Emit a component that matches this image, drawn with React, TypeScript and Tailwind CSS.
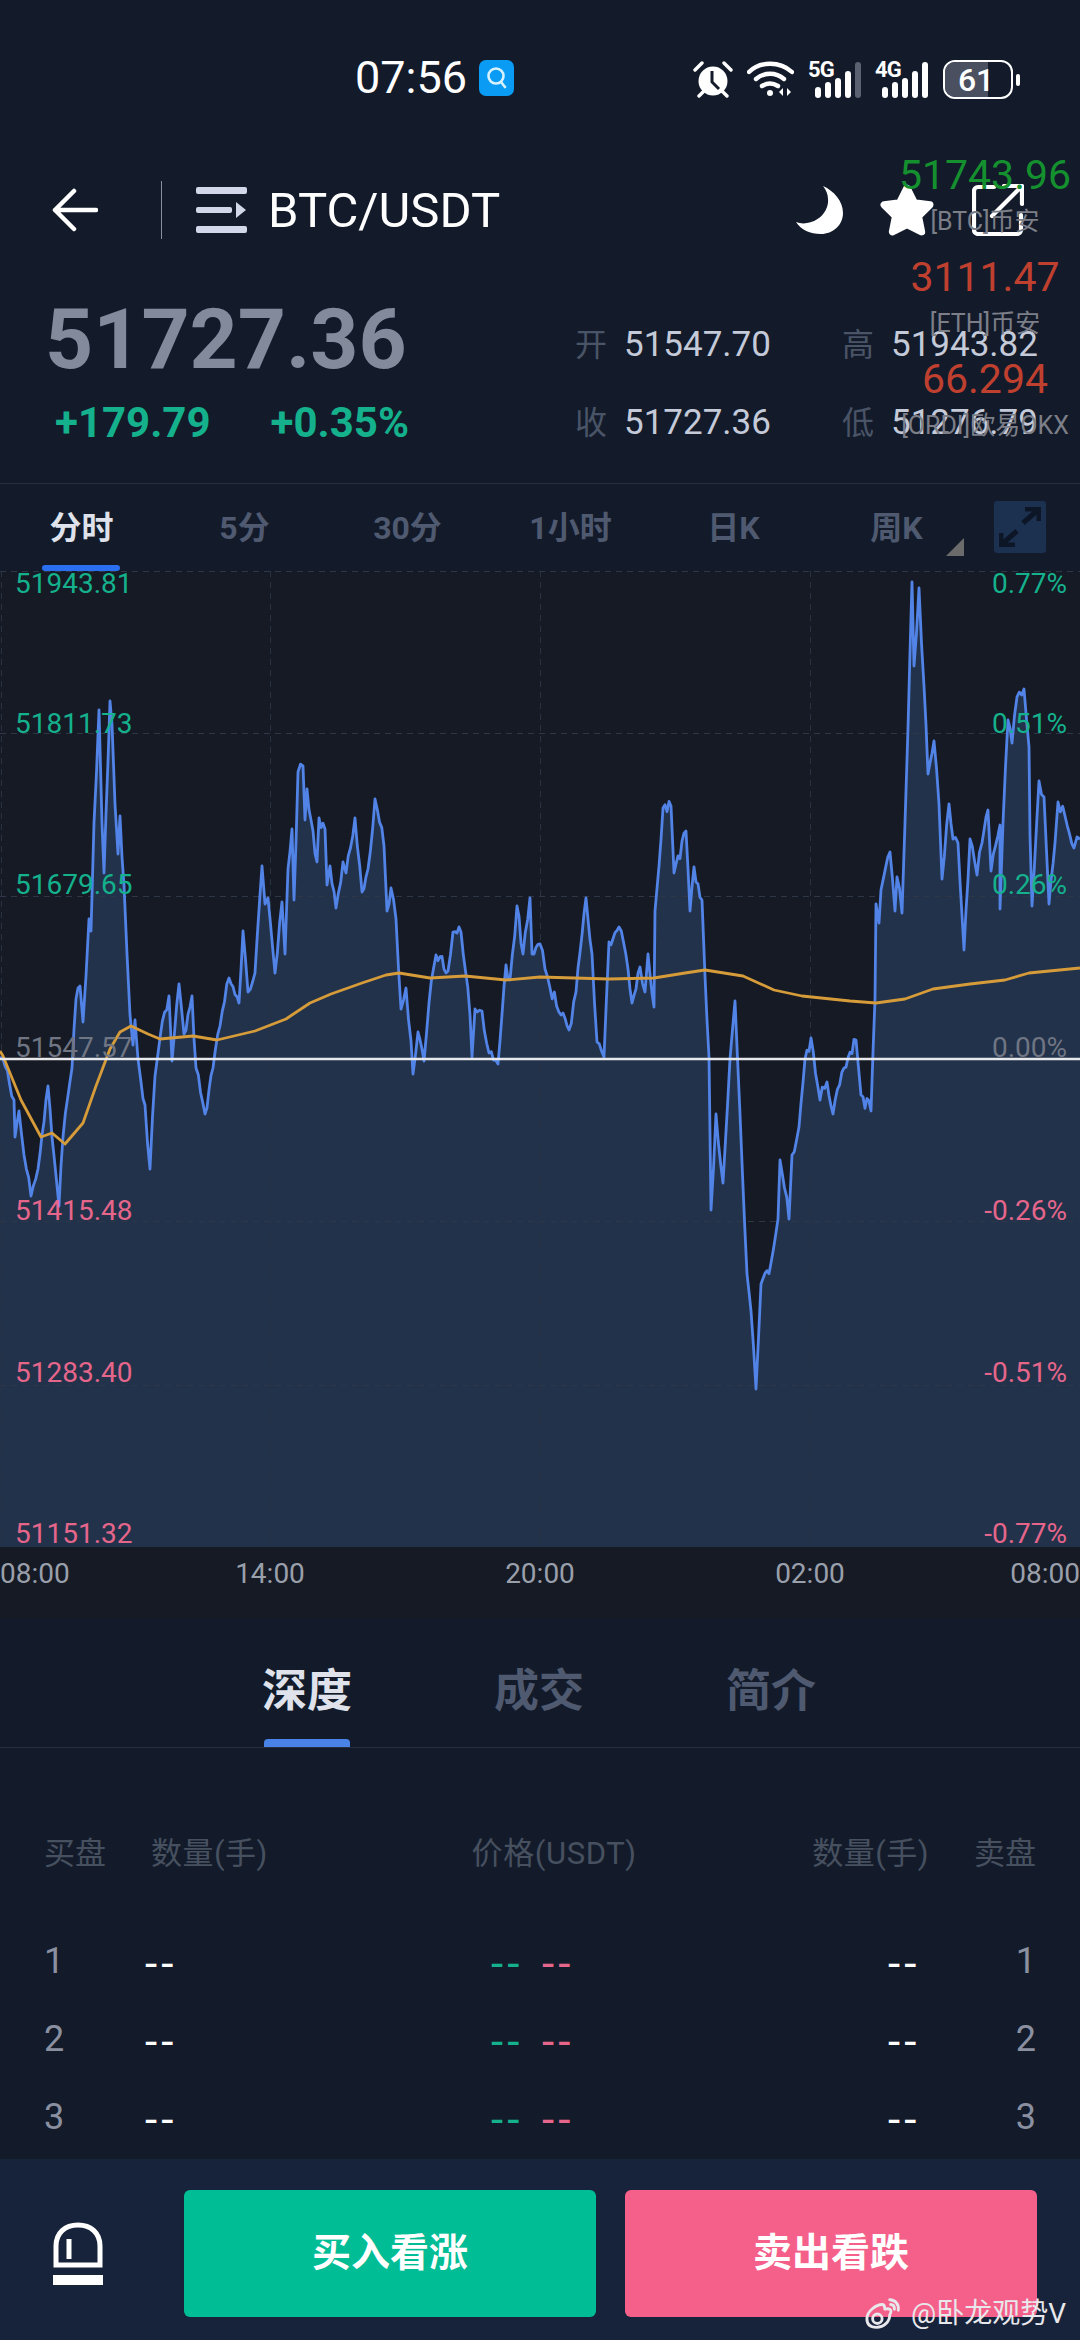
import React from "react";

const P: number[][] = [[0,1058],[3,1060],[14,1101],[15,1138],[19,1112],[24,1156],[31,1197],[38,1170],[48,1087],[52,1138],[59,1207],[63,1138],[72,1069],[76,1000],[80,987],[83,1023],[86,977],[89,920],[91,932],[94,824],[99,711],[102,824],[104,874],[110,702],[112,725],[115,805],[118,855],[120,817],[124,886],[127,955],[130,1016],[133,1046],[135,1021],[138,1060],[141,1083],[145,1106],[150,1170],[155,1077],[160,1039],[169,997],[172,1062],[179,985],[184,1035],[192,997],[196,1069],[205,1115],[213,1069],[220,1027],[229,979],[239,1004],[243,932],[248,993],[255,974],[262,867],[265,905],[268,899],[275,974],[282,903],[285,955],[288,870],[292,830],[294,901],[298,773],[303,767],[305,821],[307,790],[317,863],[319,819],[325,830],[327,886],[330,867],[336,909],[343,863],[346,874],[355,819],[362,893],[368,870],[375,800],[384,847],[387,912],[391,889],[396,920],[401,1010],[406,989],[411,1042],[413,1075],[418,1033],[424,1062],[429,1004],[436,956],[448,972],[453,933],[461,933],[470,1016],[472,1058],[475,1010],[482,1012],[489,1054],[498,1065],[506,966],[510,981],[517,907],[523,955],[530,899],[532,955],[540,945],[545,970],[550,989],[561,1016],[569,1031],[576,993],[586,899],[592,955],[597,1043],[604,1058],[609,943],[619,928],[628,970],[632,1004],[640,968],[645,993],[648,955],[654,1008],[655,912],[659,867],[663,809],[671,807],[674,874],[686,832],[690,912],[694,868],[702,901],[705,977],[709,1058],[711,1211],[716,1115],[723,1184],[730,1060],[735,1002],[740,1115],[747,1275],[751,1312],[756,1390],[761,1285],[771,1264],[778,1220],[780,1161],[789,1220],[792,1156],[799,1128],[805,1060],[811,1039],[820,1101],[827,1083],[833,1115],[844,1069],[856,1041],[861,1096],[871,1112],[875,1000],[876,905],[879,924],[881,891],[890,853],[895,912],[897,878],[902,914],[905,824],[908,729],[912,583],[914,667],[919,589],[924,687],[928,775],[934,742],[939,805],[942,880],[949,805],[953,840],[958,844],[964,951],[970,840],[977,876],[982,844],[988,811],[991,872],[1000,826],[1000,910],[1003,824],[1008,721],[1012,744],[1017,698],[1024,690],[1029,748],[1030,836],[1032,907],[1039,782],[1044,798],[1049,905],[1055,844],[1058,803],[1065,817],[1074,849],[1077,838],[1080,840]];

const MA: number[][] = [[0,1052],[3,1057],[21,1101],[41,1138],[52,1134],[65,1145],[83,1124],[96,1087],[110,1050],[120,1033],[131,1027],[148,1035],[160,1040],[193,1037],[217,1041],[255,1032],[286,1020],[310,1004],[331,995],[362,984],[386,976],[399,974],[430,979],[465,977],[506,981],[540,978],[609,980],[654,979],[685,974],[705,971],[743,977],[774,991],[802,997],[850,1002],[876,1004],[905,1000],[933,990],[970,985],[1005,981],[1029,974],[1080,969]];

// fine-grain wiggle between the traced points, so the line reads as tick data
function detail(pts: number[][]) {
  const out: number[][] = [];
  for (let i = 0; i < pts.length - 1; i++) {
    const [x0, y0] = pts[i];
    const [x1, y1] = pts[i + 1];
    out.push([x0, y0]);
    const n = Math.floor((x1 - x0) / 2);
    for (let k = 1; k < n; k++) {
      const t = k / n;
      const w = Math.sin((x0 + k * 2) * 12.9898) * 43758.5453;
      const r = w - Math.floor(w) - 0.5;
      out.push([x0 + (x1 - x0) * t, y0 + (y1 - y0) * t + r * 14]);
    }
  }
  out.push(pts[pts.length - 1]);
  return out;
}

const toPts = (a: number[][], oy: number) => a.map(([x, y]) => `${x.toFixed(1)},${(y - oy).toFixed(1)}`).join(" ");

const TOP = 572;
const LINE = toPts(detail(P), TOP);
const AREA = `0,976 ${LINE} 1080,976`;
const MALINE = toPts(MA, TOP);

function Chart() {
  const rows = [0, 162, 325, 650, 814];
  return (
    <div className="relative h-[976px] w-full bg-[#161a25]">
      <svg width="1080" height="976" viewBox="0 0 1080 976" className="absolute inset-0">
        <polygon points={AREA} fill="#22324b" />
        {rows.map((y) => (
          <line key={y} x1="0" x2="1080" y1={y + 0.5} y2={y + 0.5} stroke="#2e3748" strokeWidth="1" strokeDasharray="6 5" />
        ))}
        {[1, 270, 540, 810].map((x) => (
          <line key={x} x1={x + 0.5} x2={x + 0.5} y1="0" y2="976" stroke="#293243" strokeWidth="1" strokeDasharray="6 5" />
        ))}
        <polyline points={LINE} fill="none" stroke="#5283e6" strokeWidth="2.8" strokeLinejoin="round" />
        <polyline points={MALINE} fill="none" stroke="#d79c3a" strokeWidth="2.8" strokeLinejoin="round" />
        <line x1="0" x2="1080" y1="488" y2="488" stroke="#e6e8ec" strokeWidth="2.5" />
      </svg>
      <div className="absolute inset-0 text-[28px] leading-[32px]">
        {[
          ["51943.81", "0.77%", -3, "text-[#14b18c]"],
          ["51811.73", "0.51%", 137, "text-[#14b18c]"],
          ["51679.65", "0.26%", 298, "text-[#14b18c]"],
          ["51547.57", "0.00%", 461, "text-[#6f7582]"],
          ["51415.48", "-0.26%", 624, "text-[#e5668a]"],
          ["51283.40", "-0.51%", 786, "text-[#e5668a]"],
          ["51151.32", "-0.77%", 947, "text-[#e5668a]"],
        ].map(([a, b, y, c]) => (
          <div key={a as string} className={`absolute left-[15px] right-[13px] flex justify-between ${c}`} style={{ top: y as number }}>
            <span>{a}</span>
            <span>{b}</span>
          </div>
        ))}
      </div>
    </div>
  );
}

function Signal({ label, dim }: { label: string; dim?: boolean }) {
  return (
    <div className="relative flex h-[36px] w-[53px] items-end justify-end gap-[4px]">
      <span className="absolute left-0 top-[-3px] text-[22px] font-bold leading-[22px] tracking-[-1px] text-white">{label}</span>
      <span className="h-[11px] w-[6px] rounded-[3px] bg-white" />
      <span className="h-[16px] w-[6px] rounded-[3px] bg-white" />
      <span className="h-[20px] w-[6px] rounded-[3px] bg-white" />
      <span className="h-[27px] w-[6px] rounded-[3px] bg-white" />
      <span className={`h-[36px] w-[6px] rounded-[3px] ${dim ? "bg-[#5a6170]" : "bg-white"}`} />
    </div>
  );
}

function StatusBar() {
  return (
    <div className="relative flex h-[150px] items-start pl-[355px] pt-[55px]">
      <span className="text-[45px] font-normal leading-[46px] text-white">07:56</span>
      <span className="ml-[12px] mt-[5px] flex h-[36px] w-[35px] items-center justify-center rounded-[7px] bg-[#0a9cf5]">
        <svg width="24" height="26" viewBox="0 0 24 26" fill="none" stroke="#d8f1ff" strokeWidth="2.6" strokeLinecap="round">
          <circle cx="11" cy="11" r="7.5" />
          <path d="M16 17l4 5" />
        </svg>
      </span>
      <div className="ml-[179px] mt-[5px] flex items-center">
        <svg width="40" height="37" viewBox="0 0 40 37">
          <circle cx="20" cy="20" r="14.5" fill="#fff" />
          <path d="M19 10v11l7 7" fill="none" stroke="#131b2b" strokeWidth="3" />
          <path d="M2 9l7-7M38 9l-7-7M6 35l5-5M34 35l-5-5" stroke="#fff" strokeWidth="3.4" strokeLinecap="round" />
        </svg>
        <svg className="ml-[14px]" width="47" height="37" viewBox="0 0 47 37" fill="none" stroke="#fff" strokeWidth="4.4" strokeLinecap="round">
          <path d="M2 11C13 0 33 0 45 11" />
          <path d="M9 18c8-7 20-7 28 0" />
          <path d="M15 25c5-3 11-3 16 0" />
          <circle cx="23" cy="32" r="3" fill="#fff" stroke="none" />
          <path d="M36 27l-4 4 4 4zM40 27l4 4-4 4z" fill="#fff" stroke="none" />
        </svg>
        <div className="ml-[14px]"><Signal label="5G" dim /></div>
        <div className="ml-[14px]"><Signal label="4G" /></div>
        <div className="relative ml-[15px] h-[39px] w-[70px] overflow-hidden rounded-[12px] border-[2.5px] border-white">
          <div className="absolute inset-y-0 left-0 w-[43px] bg-[#4a5060]" />
          <span className="absolute inset-0 flex items-center justify-center pr-[4px] text-[32px] font-medium leading-none text-white">61</span>
        </div>
        <span className="ml-[3px] h-[12px] w-[4px] rounded-[2px] bg-white" />
      </div>
    </div>
  );
}

function NavBar() {
  return (
    <div className="relative flex h-[120px] items-center pl-[52px]">
      <svg width="46" height="44" viewBox="0 0 46 44" fill="none" stroke="#fff" strokeWidth="4.5" strokeLinecap="round" strokeLinejoin="round">
        <path d="M22 3L3 22l19 19M3 22h41" />
      </svg>
      <span className="ml-[63px] h-[58px] w-px bg-[#8a8f9b]" />
      <svg className="ml-[34px]" width="51" height="46" viewBox="0 0 51 46">
        <rect x="0" y="0" width="51" height="7" rx="2" fill="#d3d7ea" />
        <rect x="0" y="20" width="36" height="6" rx="2" fill="#d3d7ea" />
        <path d="M40 15l10 8-10 8z" fill="#d3d7ea" />
        <rect x="0" y="39" width="51" height="7" rx="2" fill="#d3d7ea" />
      </svg>
      <span className="ml-[21px] text-[49px] leading-none text-white">BTC/USDT</span>
      <svg className="ml-[296px]" width="47" height="48" viewBox="0 0 47 48">
        <path d="M27 0C38 5 47 15 47 27c0 12-10 21-22 21-11 0-20-4-25-12 3 1 7 2 11 1 14-2 22-14 21-24 0-5-2-9-5-13z" fill="#fff" />
      </svg>
      <svg className="ml-[36px]" width="56" height="52" viewBox="0 0 54 50">
        <path d="M27 4l7 14 15 2-11 11 3 15-14-7-14 7 3-15L5 20l15-2z" fill="#fff" stroke="#fff" strokeWidth="7" strokeLinejoin="round" />
      </svg>
      <svg className="ml-[37px]" width="52" height="52" viewBox="0 0 52 52" fill="none" stroke="#fff" strokeWidth="4.2" strokeLinecap="round" strokeLinejoin="round">
        <path d="M22 3H6a4 4 0 0 0-4 4v39a4 4 0 0 0 4 4h39a4 4 0 0 0 4-4V31" />
        <path d="M20 32L50 2M32 2h18v18" />
      </svg>
    </div>
  );
}

function Stat({ k, v }: { k: string; v: string }) {
  return (
    <div className="flex items-center">
      <span className="w-[49px] text-[32px] leading-none text-[#4a5467]">{k}</span>
      <span className="text-[35px] leading-none text-[#c5cad9]">{v}</span>
    </div>
  );
}

function PriceBlock() {
  return (
    <div className="flex h-[214px] border-b border-[#262e3f] pl-[45px]">
      <div className="w-[530px]">
        <div className="mt-[28px] text-[84px] font-bold leading-[84px] text-[#838a9c]">51727.36</div>
        <div className="mt-[20px] flex pl-[10px] text-[42px] font-bold leading-[42px] text-[#14b18c]">
          <span>+179.79</span>
          <span className="ml-[60px]">+0.35%</span>
        </div>
      </div>
      <div className="mt-[57px] grid h-[113px] grid-cols-[267px_auto] content-between">
        <Stat k="开" v="51547.70" />
        <Stat k="高" v="51943.82" />
        <Stat k="收" v="51727.36" />
        <Stat k="低" v="51276.79" />
      </div>
    </div>
  );
}

function Ticker() {
  const items = [
    ["51743.96", "[BTC]币安", "text-[#15902f]"],
    ["3111.47", "[ETH]币安", "text-[#c0402f]"],
    ["66.294", "[ORDI]欧易OKX", "text-[#c0402f]"],
  ];
  return (
    <div className="absolute left-[885px] top-[152px] flex w-[200px] flex-col items-center gap-[10px]">
      {items.map(([a, b, c]) => (
        <div key={a} className="flex flex-col items-center">
          <span className={`flex h-[46px] items-center text-[41px] leading-none ${c}`}>{a}</span>
          <span className="flex h-[46px] items-center whitespace-nowrap text-[25px] leading-none text-[#7c7f88]">{b}</span>
        </div>
      ))}
    </div>
  );
}

function Periods() {
  return (
    <div className="relative flex h-[87px] text-[32px] font-bold text-[#4f5a70]">
      {["分时", "5分", "30分", "1小时", "日K", "周K"].map((t, i) => (
        <div key={t} className={`flex h-full w-[163px] items-center justify-center ${i === 0 ? "text-[#dfe2ea]" : ""}`}>
          {t}
        </div>
      ))}
      <span className="absolute bottom-0 left-[42px] h-[6px] w-[78px] rounded-[3px] bg-[#2a6ff0]" />
      <svg className="absolute left-[946px] top-[54px]" width="18" height="18" viewBox="0 0 18 18">
        <path d="M18 0v18H0z" fill="#6b6b6b" />
      </svg>
      <div className="absolute left-[994px] top-[17px] flex h-[52px] w-[52px] items-center justify-center rounded-[3px] bg-[#1c3050]">
        <svg width="42" height="40" viewBox="0 0 42 40" fill="none" stroke="#0d1626" strokeWidth="5">
          <path d="M24 16L39 3M26 2h14v12M18 24L3 37M16 38H2V26" />
        </svg>
      </div>
    </div>
  );
}

function TimeAxis() {
  return (
    <div className="flex h-[72px] bg-[#161a25] text-[28px] leading-[54px] text-[#9aa0ab]">
      <span className="w-[70px]">08:00</span>
      <span className="ml-[165px] w-[70px] text-center">14:00</span>
      <span className="ml-[200px] w-[70px] text-center">20:00</span>
      <span className="ml-[200px] w-[70px] text-center">02:00</span>
      <span className="ml-[165px] w-[70px] text-right">08:00</span>
    </div>
  );
}

function Tabs() {
  return (
    <div className="relative flex h-[129px] items-start border-b border-[#262e3f] pl-[262px] pt-[46px] text-[45px] font-bold leading-[54px] text-[#4f5a70]">
      <span className="w-[232px] text-[#dfe2ea]">深度</span>
      <span className="w-[232px]">成交</span>
      <span>简介</span>
      <span className="absolute bottom-0 left-[264px] h-[8px] w-[86px] rounded-t-[4px] bg-[#4a83e8]" />
    </div>
  );
}

function Dash({ c }: { c: string }) {
  return <span className={`block pt-[5px] text-[44px] leading-none tracking-[4px] ${c}`}>--</span>;
}

function Book() {
  return (
    <div className="px-[44px] pt-[84px]">
      <div className="flex h-[42px] items-center whitespace-nowrap text-[31px] leading-none text-[#46505f]">
        <span className="w-[107px]">买盘</span>
        <span className="w-[321px] tracking-[0.5px]">数量(手)</span>
        <span className="w-[341px] tracking-[0.6px]">价格(USDT)</span>
        <span className="w-[162px] tracking-[0.5px]">数量(手)</span>
        <span>卖盘</span>
      </div>
      <div className="mt-[48px] flex flex-col">
        {["1", "2", "3"].map((n) => (
          <div key={n} className="flex h-[78px] items-center text-[36px] text-[#8a90a0]">
            <span className="w-[101px]">{n}</span>
            <span className="w-[346px]"><Dash c="text-white" /></span>
            <span className="w-[51px]"><Dash c="text-[#14b18c]" /></span>
            <span className="w-[346px]"><Dash c="text-[#e5668a]" /></span>
            <span className="flex-1"><Dash c="text-white" /></span>
            <span>{n}</span>
          </div>
        ))}
      </div>
    </div>
  );
}

function BottomBar() {
  return (
    <div className="relative mt-auto flex h-[181px] bg-[#17233a] pl-[53px] pt-[31px]">
      <svg className="mt-[32px]" width="50" height="63" viewBox="0 0 50 63" fill="none" stroke="#fff">
        <path d="M3 43V24C3 11 12 3 25 3s22 8 22 21v19z" strokeWidth="5" />
        <path d="M16 17v20" strokeWidth="5" />
        <path d="M0 58h50" strokeWidth="10" />
      </svg>
      <button className="ml-[81px] h-[127px] w-[412px] rounded-[6px] bg-[#00bd96] text-[39px] font-bold text-white">买入看涨</button>
      <button className="ml-[29px] h-[127px] w-[412px] rounded-[6px] bg-[#f5608a] text-[39px] font-bold text-white">卖出看跌</button>
      <div className="absolute left-[865px] top-[137px] flex items-center whitespace-nowrap">
        <svg width="38" height="36" viewBox="0 0 40 36" fill="none" stroke="#e8e8ec" strokeWidth="3">
          <path d="M26 19c0 7-6 13-14 13S2 28 2 23c0-8 10-15 16-15 4 0 2 5 3 5 3-1 9-1 5 6z" />
          <circle cx="13" cy="23" r="5" />
          <path d="M26 3c6 0 10 5 9 11M27 8c3 0 4 2 4 5" strokeLinecap="round" />
        </svg>
        <span className="ml-[8px] text-[28px] leading-none text-[#e8e8ec]">@卧龙观势V</span>
      </div>
    </div>
  );
}

export default function App() {
  return (
    <div
      className="relative flex h-[2340px] w-[1080px] flex-col overflow-hidden bg-[#131b2b]"
      style={{ fontFamily: '"Roboto","Noto Sans CJK SC",sans-serif' }}
    >
      <StatusBar />
      <NavBar />
      <PriceBlock />
      <Periods />
      <Chart />
      <TimeAxis />
      <Tabs />
      <Book />
      <BottomBar />
      <Ticker />
    </div>
  );
}
